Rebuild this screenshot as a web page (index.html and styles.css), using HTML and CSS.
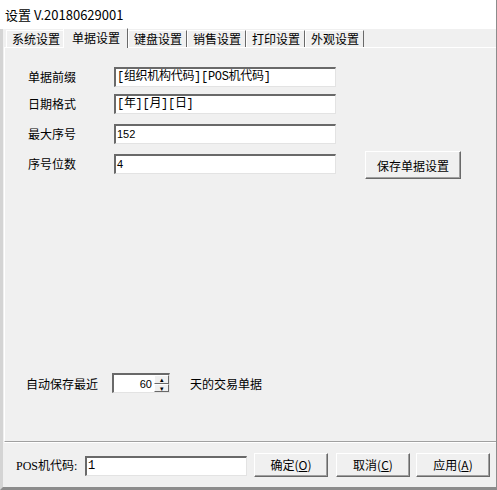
FILE: index.html
```html
<!DOCTYPE html>
<html>
    <head>
        <meta charset="utf-8">
        <link rel="stylesheet" href="styles.css">
    </head>
    <body>
        <div class="window">
            <div class="titlebar">设置 V.20180629001</div>

            <div class="tabs">
                <div class="tab">系统设置</div>
                <div class="tab selected">单据设置</div>
                <div class="tab">键盘设置</div>
                <div class="tab">销售设置</div>
                <div class="tab">打印设置</div>
                <div class="tab">外观设置</div>
            </div>

            <div class="panel">
                <div class="row">
                    <span class="label">单据前缀</span>
                    <div class="input mono">[组织机构代码][POS机代码]</div>
                </div>
                <div class="row row-second">
                    <span class="label">日期格式</span>
                    <div class="input mono">[年][月][日]</div>
                </div>
                <div class="row row-wide">
                    <span class="label">最大序号</span>
                    <div class="input">152</div>
                </div>
                <div class="row row-wide">
                    <span class="label">序号位数</span>
                    <div class="input">4</div>
                    <button class="btn btn-save">保存单据设置</button>
                </div>

                <div class="autosave">
                    <span class="label-auto">自动保存最近</span>
                    <div class="spinner">
                        <span class="spin-value">60</span>
                        <div class="spin-btns">
                            <div class="spin-btn">&#9652;</div>
                            <div class="spin-btn">&#9662;</div>
                        </div>
                    </div>
                    <span class="label-after">天的交易单据</span>
                </div>
            </div>

            <div class="footer">
                <span class="pos-label">POS机代码:</span>
                <div class="input pos-input mono">1</div>
                <button class="btn btn-foot">确定(<u>O</u>)</button>
                <button class="btn btn-foot">取消(<u>C</u>)</button>
                <button class="btn btn-foot">应用(<u>A</u>)</button>
            </div>
        </div>
    </body>
</html>
```

FILE: styles.css
```css
html, body {
    margin: 0;
    padding: 0;
}

body {
    background-color: #f0f0f0;
    font-family: "Noto Sans CJK SC", "Liberation Sans", sans-serif;
    font-size: 12px;
    color: #000;
}

.window {
    width: 497px;
    height: 490px;
    box-sizing: border-box;
    border-left: 3px solid #d4d4d4;
    border-bottom: 3px solid #8c8c8c;
    border-right: 1px solid #8c8c8c;
}

.titlebar {
    height: 29px;
    line-height: 29px;
    background-color: white;
    margin-left: -3px;
    padding-left: 5px;
    font-size: 13px;
}

.tabs {
    display: flex;
    height: 18px;
    padding-left: 3px;
    align-items: flex-end;
}

.tab {
    height: 16px;
    line-height: 16px;
    padding: 0 4px 0 5px;
    border-left: 1px solid white;
    border-top: 1px solid white;
    border-right: 1px solid #696969;
    position: relative;
}

.tab.selected {
    height: 19px;
    line-height: 18px;
    padding: 0 7px 0 8px;
    margin: 0 -1px -1px -2px;
    background-color: #f0f0f0;
    z-index: 2;
}

.tab.selected + .tab {
    margin-left: 1px;
}

.panel {
    height: 395px;
    margin-left: 1px;
    border-top: 1px solid white;
    border-left: 1px solid white;
    border-bottom: 1px solid #a0a0a0;
    box-sizing: border-box;
    padding: 19px 0 0 23px;
    box-shadow: 0 1px 0 #fff;
}

.row {
    display: flex;
    align-items: center;
    height: 20px;
}

.row-second {
    margin-top: 7px;
}

.row-wide {
    margin-top: 10px;
}

.label {
    width: 86px;
    line-height: 20px;
}

.input {
    width: 222px;
    height: 20px;
    box-sizing: border-box;
    background-color: white;
    border-top: 2px solid #696969;
    border-left: 2px solid #696969;
    border-right: 1px solid #e3e3e3;
    border-bottom: 1px solid #e3e3e3;
    padding-left: 1px;
    line-height: 16px;
    font-family: "Liberation Sans", sans-serif;
    font-size: 11px;
    white-space: nowrap;
    overflow: hidden;
}

.mono {
    font-family: "Liberation Mono", "Noto Sans CJK SC", monospace;
    font-size: 12px;
    letter-spacing: -0.3px;
}

.btn {
    font-family: "Noto Sans CJK SC", sans-serif;
    font-size: 12px;
    background-color: #f0f0f0;
    border-top: 1px solid white;
    border-left: 1px solid white;
    border-right: 1px solid #696969;
    border-bottom: 1px solid #696969;
    box-shadow: inset -1px -1px 0 #a0a0a0;
    padding: 0;
    color: #000;
}

.btn-save {
    width: 96px;
    height: 28px;
    margin-left: 29px;
    margin-top: 2px;
}

.autosave {
    display: flex;
    align-items: center;
    height: 20px;
    margin-top: 199px;
    margin-left: -2px;
}

.label-auto {
    width: 86px;
}

.spinner {
    display: flex;
    align-items: center;
    width: 58px;
    height: 20px;
    box-sizing: border-box;
    background-color: white;
    border-top: 2px solid #696969;
    border-left: 2px solid #696969;
    border-right: 1px solid #e3e3e3;
    border-bottom: 1px solid #e3e3e3;
}

.spin-value {
    flex: 1;
    text-align: right;
    font-family: "Liberation Sans", sans-serif;
    font-size: 11px;
    padding-right: 2px;
}

.spin-btns {
    display: flex;
    flex-direction: column;
    width: 15px;
    height: 17px;
}

.spin-btn {
    flex: 1;
    font-size: 7px;
    line-height: 7px;
    text-align: center;
    background-color: #f0f0f0;
    border-top: 1px solid white;
    border-left: 1px solid white;
    border-right: 1px solid #696969;
    border-bottom: 1px solid #696969;
    overflow: hidden;
}

.label-after {
    margin-left: 20px;
}

.footer {
    display: flex;
    align-items: center;
    height: 45px;
    padding-left: 13px;
}

.pos-label {
    font-family: "Liberation Serif", "Noto Sans CJK SC", serif;
    width: 69px;
}

.pos-input {
    width: 162px;
    margin-top: 3px;
}

.btn-foot {
    width: 74px;
    height: 24px;
    margin-left: 7px;
}

.btn-foot + .btn-foot {
    margin-left: 8px;
}

.btn-foot:last-child {
    margin-left: 6px;
}
```
